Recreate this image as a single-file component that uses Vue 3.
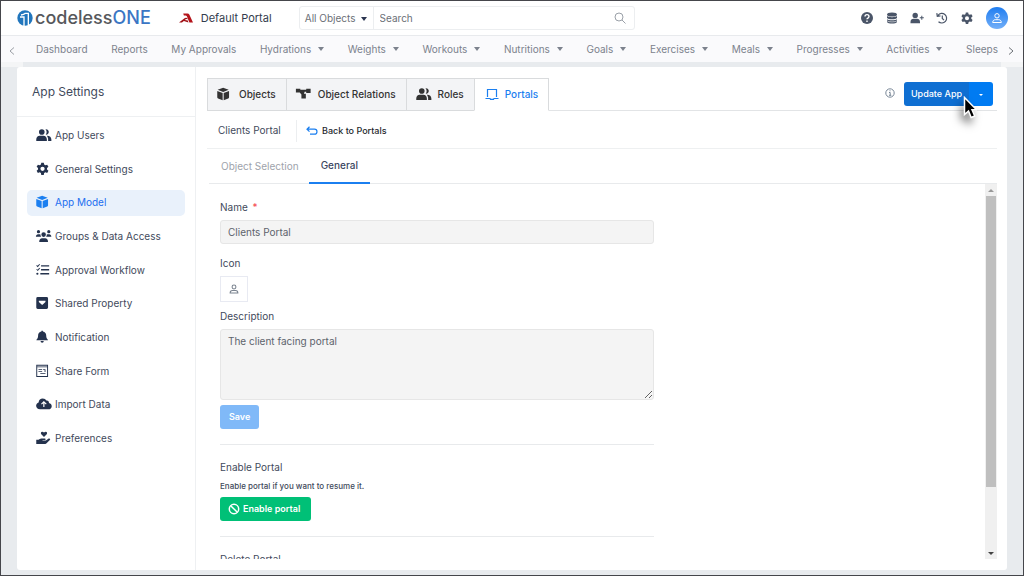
<script setup>
import { ref } from 'vue'

const menu = [
  { label: 'Dashboard' },
  { label: 'Reports' },
  { label: 'My Approvals' },
  { label: 'Hydrations', more: true },
  { label: 'Weights', more: true },
  { label: 'Workouts', more: true },
  { label: 'Nutritions', more: true },
  { label: 'Goals', more: true },
  { label: 'Exercises', more: true },
  { label: 'Meals', more: true },
  { label: 'Progresses', more: true },
  { label: 'Activities', more: true },
  { label: 'Sleeps' }
]

const icons = {
  users: 'M9 1.600a3.800 3.800 0 1 1 0 7.600 3.800 3.800 0 0 1 0-7.600zM1.500 17.500v-2c0-3 2-5 4.700-5h5c2.700 0 4.700 2 4.700 5v2zM14 1.700a3.700 3.700 0 1 1 .4 7.300 6 6 0 0 0-.4-7.300zM17.600 17.500v-2c0-2-.7-3.700-1.800-5 3.700-.3 6.200 1.800 6.200 5v2z',
  gear: 'M8.300 1h3.400l.5 2.500 1.700 1 2.400-.9L18 6.500l-1.900 1.700v2l1.900 1.700-1.700 2.900-2.400-.8-1.700 1-.5 2.500H8.300L7.800 15l-1.700-1-2.400.8L2 11.900l1.900-1.700v-2L2 6.500l1.700-2.900 2.400.9 1.700-1zM10 6.400a2.900 2.900 0 1 0 0 5.800 2.900 2.900 0 0 0 0-5.800z',
  cube: 'M9.500 1l7.500 2.800-7.500 3L2 3.800zM1.500 5.300L8.800 8.200V18L2.600 15.600q-1.100-.5-1.100-1.600zM17.500 5.300L10.200 8.200V18l6.200-2.400q1.100-.5 1.100-1.600z',
  groups: 'M4.500 1.500a2.200 2.200 0 1 1 0 4.400 2.200 2.200 0 0 1 0-4.400zM18.500 1.500a2.200 2.200 0 1 1 0 4.400 2.200 2.200 0 0 1 0-4.400zM11.500 4.500a3.100 3.100 0 1 1 0 6.200 3.100 3.100 0 0 1 0-6.200zM1 10.500C1 8.300 2.300 7 4 7h2.200q.6 0 1.100.3c-.2 1.300.1 2.300.9 3.200zM22 10.500C22 8.300 20.700 7 19 7h-2.200q-.6 0-1.100.3c.2 1.300-.1 2.300-.9 3.200zM5.500 17.500c0-3.300 1.700-5 4-5h4c2.300 0 4 1.700 4 5z',
  list: 'M8 3h11v1.900H8zM8 8.300h11v1.900H8zM7 13.600h12v1.900H7zM1.500 3.600l.9-.9 1 1 2.200-2.500 1 .8-3.100 3.600zM1.500 8.900l.9-.9 1 1 2.200-2.500 1 .8-3.100 3.600zM3 13.100a1.500 1.500 0 1 1 0 3 1.500 1.500 0 0 1 0-3z',
  square: 'M3.500 1.500h12q2 0 2 2v12q0 2-2 2h-12q-2 0-2-2v-12q0-2 2-2zM5 6.500v1.500l4.500 4.300L14 8V6.500z',
  bell: 'M8.500 1h2v1.200c3 .5 4.500 2.800 4.500 5.300 0 2.800.8 4.200 2 5.300q.5.600.3 1.200H1.700q-.2-.600.3-1.200C3.200 11.700 4 10.300 4 7.500 4 5 5.500 2.700 8.500 2.200zM7.300 15h4.400a2.200 2.200 0 0 1-4.400 0z',
  form: 'M1.500 1h16v16.500h-16zM2.800 4.500v11.700h13.400V4.500zM2.800 2.300v1h13.400v-1zM4.500 7h5v1h-5zM4.500 9.500h5v1h-5zM10.800 7H14v4h-1.200V8.200h-2zM7 12.500h7v1.200H7z',
  cloud: 'M18.700 8.200c2.200.5 3.800 2.100 3.800 4.200 0 2.500-2 4.300-4.500 4.300H6.500C3.500 16.700 1.300 14.600 1.300 12c0-2.200 1.400-3.900 3.400-4.600C4.900 4.200 7.200 2 10.300 2c2.300 0 4 1.100 4.900 2.900 2-.5 3.900 1.200 3.500 3.300zM11.800 5.500L8 9.300l1 1 2-1.700v5h1.600v-5l2 1.700 1-1z',
  hand: 'M12 8L8.300 4.400C7.200 3 8 1 9.600 1q1.300 0 2.400 1.200Q13.100 1 14.400 1c1.600 0 2.400 2 1.300 3.400zM1.500 12h3l1.700-1.300q.8-.6 2-.6h5c1.400 0 1.400 2 0 2H10v.8h4.600l3.700-2.600c1.500-.9 2.900.7 1.600 1.900l-4.400 4.500q-.8.800-1.800.8H1.500z',
  nodes: 'M1 2.500h6v1.300h8V2.500h6v5.700h-6V6.500H12.900l-.9 2.200V9h2.500v6.500h-6V10.100L6.200 7.500H1z'
}

const sections = [
  { label: 'App Users', icon: 'users' },
  { label: 'General Settings', icon: 'gear' },
  { label: 'App Model', icon: 'cube' },
  { label: 'Groups & Data Access', icon: 'groups' },
  { label: 'Approval Workflow', icon: 'list' },
  { label: 'Shared Property', icon: 'square' },
  { label: 'Notification', icon: 'bell' },
  { label: 'Share Form', icon: 'form' },
  { label: 'Import Data', icon: 'cloud' },
  { label: 'Preferences', icon: 'hand' }
]

const tabs = [
  { label: 'Objects', icon: 'cube' },
  { label: 'Object Relations', icon: 'nodes' },
  { label: 'Roles', icon: 'users' },
  { label: 'Portals', icon: 'laptop' }
]

const name = ref('Clients Portal')
const description = ref('The client facing portal')
</script>

<template>
  <div class="window">
    <header class="topbar">
      <a class="brand" href="#">
        <svg class="brand-mark" viewBox="0 0 48 48" aria-hidden="true">
          <circle cx="24" cy="24" r="23" fill="#2176bd" />
          <path d="M9 21h12v27M12 15q9-1 13-5h9v38" fill="none" stroke="#fff" stroke-width="4" />
        </svg>
        <span class="brand-name">codeless<span class="brand-one">ONE</span></span>
      </a>
      <a class="portal" href="#">
        <svg class="portal-mark" viewBox="0 0 43 30" aria-hidden="true">
          <path fill="#b4141b" d="M13 1h13q4 0 6 4l11 24H32L24 10q-1-3-4-3h-5z" />
          <path fill="#a01015" d="M0 29l15-12q5-4 10-2l2 4q-6-2-9 2l9 2 2 6-14-5-6 5z" />
        </svg>
        <span>Default Portal</span>
      </a>
      <form class="search" @submit.prevent>
        <button class="scope" type="button">All Objects <i class="caret dark"></i></button>
        <input class="query" type="search" placeholder="Search" aria-label="Search" />
        <button class="go" type="submit" aria-label="Run search">
          <svg viewBox="0 0 12 12" fill="none" stroke="#9aa0a8" stroke-width="1"><circle cx="5" cy="5" r="4" /><path d="M8 8l3.500 3.500" /></svg>
        </button>
      </form>
      <div class="tools">
        <button aria-label="Help">
          <svg viewBox="0 0 14 14"><circle cx="7" cy="7" r="6" fill="#4a5568" /><path d="M5 5.600c0-2.600 4-2.600 4 0 0 1.500-2 1.400-2 2.700M7 9.500V11" fill="none" stroke="#fff" stroke-width="1.400" /></svg>
        </button>
        <button aria-label="Data">
          <svg viewBox="0 0 14 14" fill="#4a5568"><ellipse cx="7" cy="3.500" rx="5" ry="2" /><path d="M2 5c1.500 1.500 8.500 1.500 10 0v2c-1 1.700-9 1.700-10 0zM2 8.200c1.500 1.500 8.500 1.500 10 0v2.800c-1 2-9 2-10 0z" /><path d="M2 9.800c1.500 1.500 8.500 1.500 10 0" fill="none" stroke="#fff" stroke-width=".6" /></svg>
        </button>
        <button aria-label="Add user">
          <svg viewBox="0 0 14 14" fill="#4a5568"><circle cx="5.200" cy="4.400" r="2.700" /><path d="M.5 12.300V11c0-2 1.400-3.200 3-3.200H7c1.700 0 3 1.200 3 3.200v1.300zM11.300 4.800h1v1.500h1.500v1h-1.500v1.500h-1V7.300H9.800v-1h1.500z" /></svg>
        </button>
        <button aria-label="History">
          <svg viewBox="0 0 14 14" fill="none" stroke="#4a5568" stroke-width="1.200"><path d="M3 4.300A4.800 4.800 0 1 1 3.500 10.700M1.800 2.200l.5 3.100 3.200-.4M7.300 4.500v3l1.700 1.600" /></svg>
        </button>
        <button aria-label="Settings">
          <svg viewBox="0 0 20 18" fill="#4a5568" fill-rule="evenodd"><path :d="icons.gear" /></svg>
        </button>
        <button class="avatar" aria-label="Account">
          <svg viewBox="0 0 14 14" fill="none" stroke="#fff" stroke-width="1"><circle cx="7" cy="4.800" r="2.200" /><path d="M2.700 11.500c0-1.900 1.300-2.800 2.600-2.800h3.400c1.300 0 2.600.9 2.600 2.800z" /></svg>
        </button>
      </div>
    </header>

    <nav class="menu" aria-label="Objects">
      <button class="arrow" aria-label="Previous"><svg viewBox="0 0 6 8" fill="none" stroke="#9a9ea4" stroke-width="1"><path d="M5 0.500L1 4l4 3.500" /></svg></button>
      <div class="menu-items">
        <a v-for="m in menu" :key="m.label" href="#">{{ m.label }}<i v-if="m.more" class="caret"></i></a>
      </div>
      <button class="arrow" aria-label="Next"><svg viewBox="0 0 6 8" fill="none" stroke="#6c7076" stroke-width="1"><path d="M1 0.500L5 4 1 7.500" /></svg></button>
    </nav>
    <div class="strip"></div>

    <main class="card">
      <aside class="side">
        <h1>App Settings</h1>
        <nav class="side-items" aria-label="App settings">
          <a v-for="s in sections" :key="s.label" href="#" :class="{ on: s.label === 'App Model' }">
            <svg viewBox="0 0 24 19" fill="currentColor" fill-rule="evenodd" aria-hidden="true"><path :d="icons[s.icon]" /></svg>
            <span>{{ s.label }}</span>
          </a>
        </nav>
      </aside>

      <section class="content">
        <div class="bar">
          <div class="tabs">
            <button v-for="t in tabs" :key="t.label" :class="{ on: t.icon === 'laptop' }">
              <svg v-if="t.icon === 'laptop'" class="laptop" viewBox="0 0 14 12" fill="none" stroke="currentColor" stroke-width="1.200"><path d="M2.500 9V1.500h9V9M.5 10.500H5l.5.800h3l.5-.8h4.500" /></svg>
              <svg v-else viewBox="0 0 24 19" fill="currentColor" fill-rule="evenodd"><path :d="icons[t.icon]" /></svg>
              <span>{{ t.label }}</span>
            </button>
          </div>
          <div class="actions">
            <svg class="info" viewBox="0 0 10 10" fill="none" stroke="#6b7a8c"><circle cx="5" cy="5" r="4.200" stroke-width=".9" /><path d="M4 4.500h1.200v2.800M4 7.300h2.300M5 2.300v1" stroke-width=".9" /></svg>
            <div class="split">
              <button class="update">Update App</button>
              <button class="drop" aria-label="More update options"><i class="caret"></i></button>
              <svg class="pointer" viewBox="0 0 14 24" aria-hidden="true"><path d="M1.500 1.500v17l4-3.500 2.700 6.500 3.500-1.500L9 13.800h4.500z" fill="#000" stroke="#fff" stroke-width="1.500" /></svg>
            </div>
          </div>
        </div>

        <div class="crumb">
          <h2>Clients Portal</h2>
          <a href="#"><svg viewBox="0 0 12 10" fill="none" stroke="#1b7ff0" stroke-width="1.200"><path d="M3.500.8L1 3.200l2.500 2.500M1 3.200h7.500c3.300 0 3.300 5 0 5H4" /></svg>Back to Portals</a>
        </div>

        <div class="subtabs">
          <button>Object Selection</button>
          <button class="on">General</button>
        </div>

        <div class="scroller">
          <form class="form" @submit.prevent>
            <label for="name">Name <b>*</b></label>
            <input id="name" v-model="name" type="text" />
            <label for="icon">Icon</label>
            <button id="icon" class="pick" type="button" aria-label="Icon">
              <svg viewBox="0 0 14 14" fill="none" stroke="#7b8490" stroke-width="1.500"><circle cx="7" cy="4.200" r="2.700" /><path d="M1.600 12.500c0-2.300 1.500-3.300 3.200-3.300h4.400c1.700 0 3.200 1 3.200 3.300z" /></svg>
            </button>
            <label for="description">Description</label>
            <textarea id="description" v-model="description"></textarea>
            <button class="save" type="submit">Save</button>
            <hr />
            <h3>Enable Portal</h3>
            <p>Enable portal if you want to resume it.</p>
            <button class="enable" type="button">
              <svg viewBox="0 0 12 12" fill="none" stroke="#fff" stroke-width="1.500"><circle cx="6" cy="6" r="4.700" /><path d="M2.700 2.700l6.600 6.600" /></svg>Enable portal
            </button>
            <hr />
            <h3>Delete Portal</h3>
          </form>
          <div class="rail" aria-hidden="true">
            <i class="up"></i>
            <div class="track"><div class="thumb"></div></div>
            <i class="down"></i>
          </div>
        </div>
      </section>
    </main>
  </div>
</template>

<style>
html,
body,
#app {
  height: 100%;
}
</style>

<style scoped>
* {
  box-sizing: border-box;
  margin: 0;
}

.window {
  height: 100%;
  display: flex;
  flex-direction: column;
  border: 1px solid #45464b;
  background: #e8ebee;
  color: #3f4a5c;
  font: 400 10px/14px Inter, "Liberation Sans", sans-serif;
  overflow: hidden;
}

button,
input,
textarea {
  font: inherit;
  color: inherit;
  border: 0;
  padding: 0;
  background: none;
}

a {
  color: inherit;
  text-decoration: none;
}

svg {
  flex: none;
  display: block;
}

.caret {
  display: inline-block;
  border: 3px solid transparent;
  border-top: 4px solid #7c828d;
  border-bottom: 0;
}

.caret.dark {
  border-top-color: #2b3550;
  margin-left: 3px;
  vertical-align: middle;
}

.topbar {
  flex: none;
  height: 35px;
  display: flex;
  align-items: center;
  padding: 0 15px 0 16px;
  background: #fff;
  border-bottom: 1px solid #e8eaed;
}

.brand,
.portal {
  display: flex;
  align-items: center;
}

.brand-mark {
  width: 16px;
  height: 16px;
  margin-right: 2px;
}

.brand-name {
  font-size: 18px;
  line-height: 22px;
  font-weight: 500;
  color: #56585c;
}

.brand-one {
  color: #3b76c4;
}

.portal {
  margin-left: 28px;
  font-size: 11px;
  color: #333c4d;
}

.portal-mark {
  width: 14px;
  height: 10px;
  margin-right: 8px;
}

.search {
  flex: none;
  width: 336px;
  height: 24px;
  margin-left: 27px;
  display: flex;
  align-items: stretch;
  border: 1px solid #eceef0;
  border-radius: 3px;
  color: #6b7077;
}

.scope {
  width: 74px;
  border-right: 1px solid #eceef0;
}

.query {
  flex: 1;
  min-width: 0;
  padding: 0 6px;
  outline: 0;
}

.query::placeholder {
  color: #6b7077;
  opacity: 1;
}

.go {
  padding: 0 8px;
}

.go svg {
  width: 12px;
  height: 12px;
}

.tools {
  margin-left: auto;
  display: flex;
  align-items: center;
  gap: 11px;
}

.tools svg {
  width: 14px;
  height: 14px;
}

.tools .avatar {
  width: 22px;
  height: 22px;
  margin-left: 1px;
  display: grid;
  place-items: center;
  border-radius: 50%;
  background: linear-gradient(#1f7df0, #73aff8);
}

.menu {
  flex: none;
  height: 26px;
  display: flex;
  align-items: center;
  background: #fafafc;
}

.strip {
  flex: none;
  height: 5px;
  border: solid #f4f5f6;
  border-width: 0 22px;
}

.menu-items {
  flex: 1;
  min-width: 0;
  display: flex;
  align-items: center;
  justify-content: space-between;
  color: #7c828d;
}

.menu-items a {
  display: flex;
  align-items: center;
  gap: 7px;
  white-space: nowrap;
}

.arrow {
  width: 25px;
  padding-top: 4px;
  display: flex;
  justify-content: center;
}

.arrow:first-child {
  margin-right: 10px;
  justify-content: flex-start;
  padding-left: 8px;
}

.arrow svg {
  width: 6px;
  height: 8px;
}

.card {
  flex: 1;
  min-height: 0;
  margin: 0 16px 5px;
  display: flex;
  background: #fff;
  border-radius: 3px;
}

.side {
  flex: none;
  width: 179px;
  border-right: 1px solid #eef0f2;
}

.side h1 {
  height: 50px;
  padding: 0 15px;
  font-size: 12px;
  font-weight: 400;
  line-height: 49px;
  border-bottom: 1px solid #eef0f2;
}

.side-items {
  height: 329px;
  margin: 6px 10px 0;
  display: flex;
  flex-direction: column;
  justify-content: space-between;
}

.side-items a {
  height: 26px;
  padding: 0 0 2px 8px;
  display: flex;
  align-items: center;
  gap: 2px;
  border-radius: 5px;
}

.side-items svg {
  width: 18px;
  height: 14px;
  color: #24324d;
}

.side-items .on {
  background: #e9f1fb;
  color: #1b6ef0;
}

.side-items .on svg {
  color: #1b7ff0;
}

.content {
  flex: 1;
  min-width: 0;
  display: flex;
  flex-direction: column;
  padding: 11px 10px 11px 11px;
}

.bar {
  flex: none;
  height: 33px;
  display: flex;
  justify-content: space-between;
  border-bottom: 1px solid #e2e4e6;
}

.tabs {
  display: flex;
  height: 33px;
}

.tabs button {
  display: flex;
  align-items: center;
  gap: 5px;
  padding: 0 10px 2px 8px;
  border: 1px solid #d9dbdd;
  border-right-width: 0;
  background: #f3f4f6;
  color: #333;
  font-weight: 500;
}

.tabs svg {
  width: 18px;
  height: 14px;
}

.tabs .laptop {
  width: 14px;
  height: 12px;
  margin: 0 1px 0 2px;
}

.tabs .on {
  border-right-width: 1px;
  border-bottom-color: #fff;
  background: #fff;
  color: #1b7ff0;
}

.actions {
  display: flex;
  align-items: flex-start;
  padding: 4px 4px 0 0;
}

.info {
  width: 10px;
  height: 10px;
  margin: 6px 9px 0 0;
}

.split {
  position: relative;
  display: flex;
  height: 24px;
}

.update {
  width: 65px;
  border-radius: 3px 0 0 3px;
  background: #0f6fd2;
  color: #fff;
  font-size: 9px;
  font-weight: 500;
}

.drop {
  width: 24px;
  border-radius: 0 3px 3px 0;
  background: #007bf2;
}

.drop .caret {
  border-width: 2px 2px 0;
  border-top-color: #fff;
  vertical-align: middle;
}

.pointer {
  position: absolute;
  left: 59px;
  top: 14px;
  width: 14px;
  height: 24px;
  filter: drop-shadow(-3px 6px 4px rgba(0, 0, 0, 0.5));
}

.crumb {
  flex: none;
  height: 38px;
  display: flex;
  align-items: center;
  padding: 3px 0 0 11px;
  border-bottom: 1px solid #eef0f1;
}

.crumb h2 {
  width: 79px;
  height: 22px;
  font-size: 10px;
  line-height: 20px;
  font-weight: 400;
  border-right: 1px solid #eceef0;
}

.crumb a {
  display: flex;
  align-items: center;
  gap: 4px;
  margin-left: 9px;
  font-size: 9px;
  font-weight: 500;
  color: #24282e;
}

.crumb svg {
  width: 12px;
  height: 10px;
}

.subtabs {
  flex: none;
  height: 35px;
  margin-left: 2px;
  display: flex;
  border-bottom: 1px solid #e8eaec;
}

.subtabs button {
  height: 35px;
  padding: 0 10px 2px 12px;
  color: #9ea3ab;
}

.subtabs .on {
  padding-right: 12px;
  border-bottom: 2px solid #1b7ff0;
  color: #3b4660;
  font-weight: 500;
}

.scroller {
  flex: 1;
  min-height: 0;
  display: flex;
  justify-content: space-between;
  overflow: hidden;
}

.form {
  width: 434px;
  margin-left: 13px;
  padding-top: 16px;
  display: flex;
  flex-direction: column;
  align-items: flex-start;
}

.form > * {
  flex: none;
}

.form label b {
  margin-left: 2px;
  color: #f4444e;
  font-weight: 400;
}

.form input,
.form textarea {
  width: 100%;
  padding: 0 7px;
  border: 1px solid #e6e6e6;
  border-radius: 3px;
  background: #f4f4f4;
  color: #5d636c;
}

.form input {
  height: 24px;
  margin: 6px 0 12px;
}

.form textarea {
  height: 71px;
  margin: 6px 0 5px;
  padding-top: 4px;
}

.pick {
  width: 28px;
  height: 26px;
  margin: 6px 0 7px;
  display: grid;
  place-items: center;
  border: 1px solid #e8eaf2;
}

.pick svg {
  width: 10px;
  height: 10px;
}

.save,
.enable {
  height: 24px;
  padding: 0 9px;
  border-radius: 3px;
  background: #80b9f8;
  color: #fff;
  font-size: 9px;
  font-weight: 600;
}

.form hr {
  width: 100%;
  height: 1px;
  margin: 15px 0;
  border: 0;
  background: #e8eaec;
}

.form h3 {
  font-size: 10px;
  font-weight: 400;
}

.form p {
  margin: 5px 0 4px;
  font-size: 8px;
  font-weight: 500;
}

.enable {
  display: flex;
  align-items: center;
  gap: 3px;
  padding: 0 11px 0 8px;
  background: #00c077;
}

.enable svg {
  width: 12px;
  height: 12px;
}

.rail {
  flex: none;
  width: 12px;
  display: flex;
  flex-direction: column;
  align-items: center;
  background: #f0f0f0;
}

.rail .up,
.rail .down {
  margin: 5px 0 4px;
  border: 3px solid transparent;
}

.rail .up {
  border-top: 0;
  border-bottom-color: #999;
}

.rail .down {
  border-bottom: 0;
  border-top-color: #444;
}

.track {
  flex: 1;
  width: 10px;
}

.thumb {
  height: 83%;
  background: #bfbfbf;
}
</style>
